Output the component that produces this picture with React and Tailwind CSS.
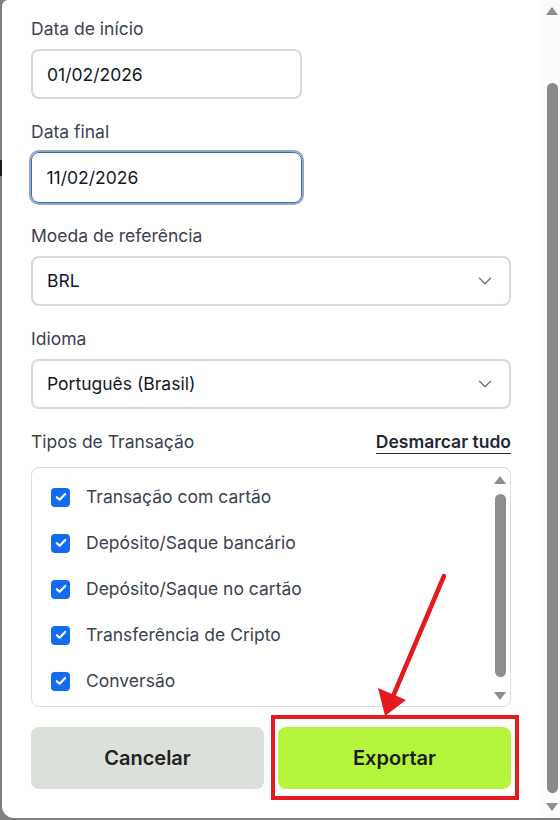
import { ChevronDown } from "lucide-react";

const tipos = [
  "Transação com cartão",
  "Depósito/Saque bancário",
  "Depósito/Saque no cartão",
  "Transferência de Cripto",
  "Conversão",
];

export default function App() {
  return (
    <div className="relative w-[560px] h-[820px] overflow-hidden bg-[#7f7f7f] pl-[2px] pb-[2px] font-['Inter',sans-serif]">
      <div className="absolute left-0 top-[160px] h-[16px] w-[2px] bg-[#1c1a14]" />
      <div className="flex h-full rounded-tl-[6px] rounded-bl-[12px] bg-white">
        <div className="w-[538px] shrink-0 px-[29px] pt-[17px]">
          <Field label="Data de início">
            <input
              readOnly
              value="01/02/2026"
              className="h-[50px] w-[271px] rounded-lg border-2 border-[#d5d8dd] pl-[14px] text-[17.5px] text-[#111827] outline-none"
            />
          </Field>
          <Field label="Data final">
            <input
              readOnly
              value="11/02/2026"
              className="h-[51px] w-[271px] rounded-lg border-[1.5px] border-[#1a73e8] pl-[14.5px] text-[17.5px] text-[#111827] outline-none shadow-[0_0_0_2px_#a2a6ad]"
            />
          </Field>
          <Field label="Moeda de referência">
            <Select value="BRL" />
          </Field>
          <Field label="Idioma">
            <Select value="Português (Brasil)" />
          </Field>

          <div className="flex items-start justify-between">
            <span className="text-[17.5px] leading-6 text-[#3b4250]">Tipos de Transação</span>
            <span className="border-b-[1.5px] border-[#1f2937] text-[17.5px] font-semibold leading-[23px] text-[#1f2937]">
              Desmarcar tudo
            </span>
          </div>

          <div className="mt-[13px] flex h-[240px] rounded-lg border border-[#d9dce1] overflow-hidden">
            <div className="flex-1 pl-[19px] pt-[6px]">
              {tipos.map((t) => (
                <div key={t} className="flex h-[46px] items-center gap-[16px]">
                  <Checkbox />
                  <span className="text-[17.5px] text-[#3b4250]">{t}</span>
                </div>
              ))}
            </div>
            <div className="flex w-[17px] flex-col items-center pr-[3px] pt-[8px] pb-[6px]">
              <ArrowUp className="w-[12px] h-[8px]" />
              <div className="mt-[10px] w-[11px] flex-1 rounded-full bg-[#8d8d8d]" />
              <div className="mt-[15px]" />
              <ArrowDown className="w-[12px] h-[8px]" />
            </div>
          </div>

          <div className="mt-[20px] flex gap-[14px]">
            <button className="h-[62px] flex-1 rounded-lg bg-[#dce0da] text-[20px] font-semibold text-[#222]">
              Cancelar
            </button>
            <div className="relative flex-1">
              <button className="h-[62px] w-full rounded-lg bg-[#b4f43d] text-[20px] font-semibold text-[#1c1c1c]">
                Exportar
              </button>
              <div className="absolute -left-[7px] -right-[8px] -top-[12px] -bottom-[11px] border-4 border-[#e31b1f]" />
            </div>
          </div>
        </div>

        <div className="flex w-[20px] flex-col items-center bg-[#fbfbfb] pl-[4px] pt-[7px] pb-[7px]">
          <ArrowUp className="w-[12px] h-[8px]" />
          <div className="mt-[68px] w-[11px] flex-1 rounded-full bg-[#8a8a8a]" />
          <div className="mt-[10px]" />
          <ArrowDown className="w-[12px] h-[8px]" />
        </div>
      </div>

      <svg className="pointer-events-none absolute inset-0" width="560" height="820">
        <line x1="444" y1="576" x2="394" y2="694" stroke="#e31b1f" strokeWidth="4.5" strokeLinecap="round" />
        <polygon points="385,716 378,688 406,700" fill="#e31b1f" />
      </svg>
    </div>
  );
}

function Field({ label, children }) {
  return (
    <div className="mb-[21px]">
      <div className="mb-2 text-[17.5px] leading-6 text-[#3b4250]">{label}</div>
      {children}
    </div>
  );
}

function Select({ value }) {
  return (
    <div className="flex h-[50px] w-full items-center justify-between rounded-lg border-2 border-[#d5d8dd] pl-[14px] pr-[13px]">
      <span className="text-[17.5px] text-[#111827]">{value}</span>
      <ChevronDown size={22} strokeWidth={1.4} className="text-[#6b7280]" />
    </div>
  );
}

function Checkbox() {
  return (
    <span className="flex h-[19px] w-[19px] shrink-0 items-center justify-center rounded-[4px] bg-[#136cef]">
      <svg width="12" height="10" viewBox="0 0 12 10">
        <path d="M1.8 5.2 4.6 7.8 10.2 2" fill="none" stroke="#fff" strokeWidth="2.2" strokeLinecap="round" strokeLinejoin="round" />
      </svg>
    </span>
  );
}

function ArrowUp({ className }) {
  return (
    <svg className={className} viewBox="0 0 12 8">
      <polygon points="6,0 12,8 0,8" fill="#8d8d8d" />
    </svg>
  );
}

function ArrowDown({ className }) {
  return (
    <svg className={className} viewBox="0 0 12 8">
      <polygon points="0,0 12,0 6,8" fill="#8d8d8d" />
    </svg>
  );
}
